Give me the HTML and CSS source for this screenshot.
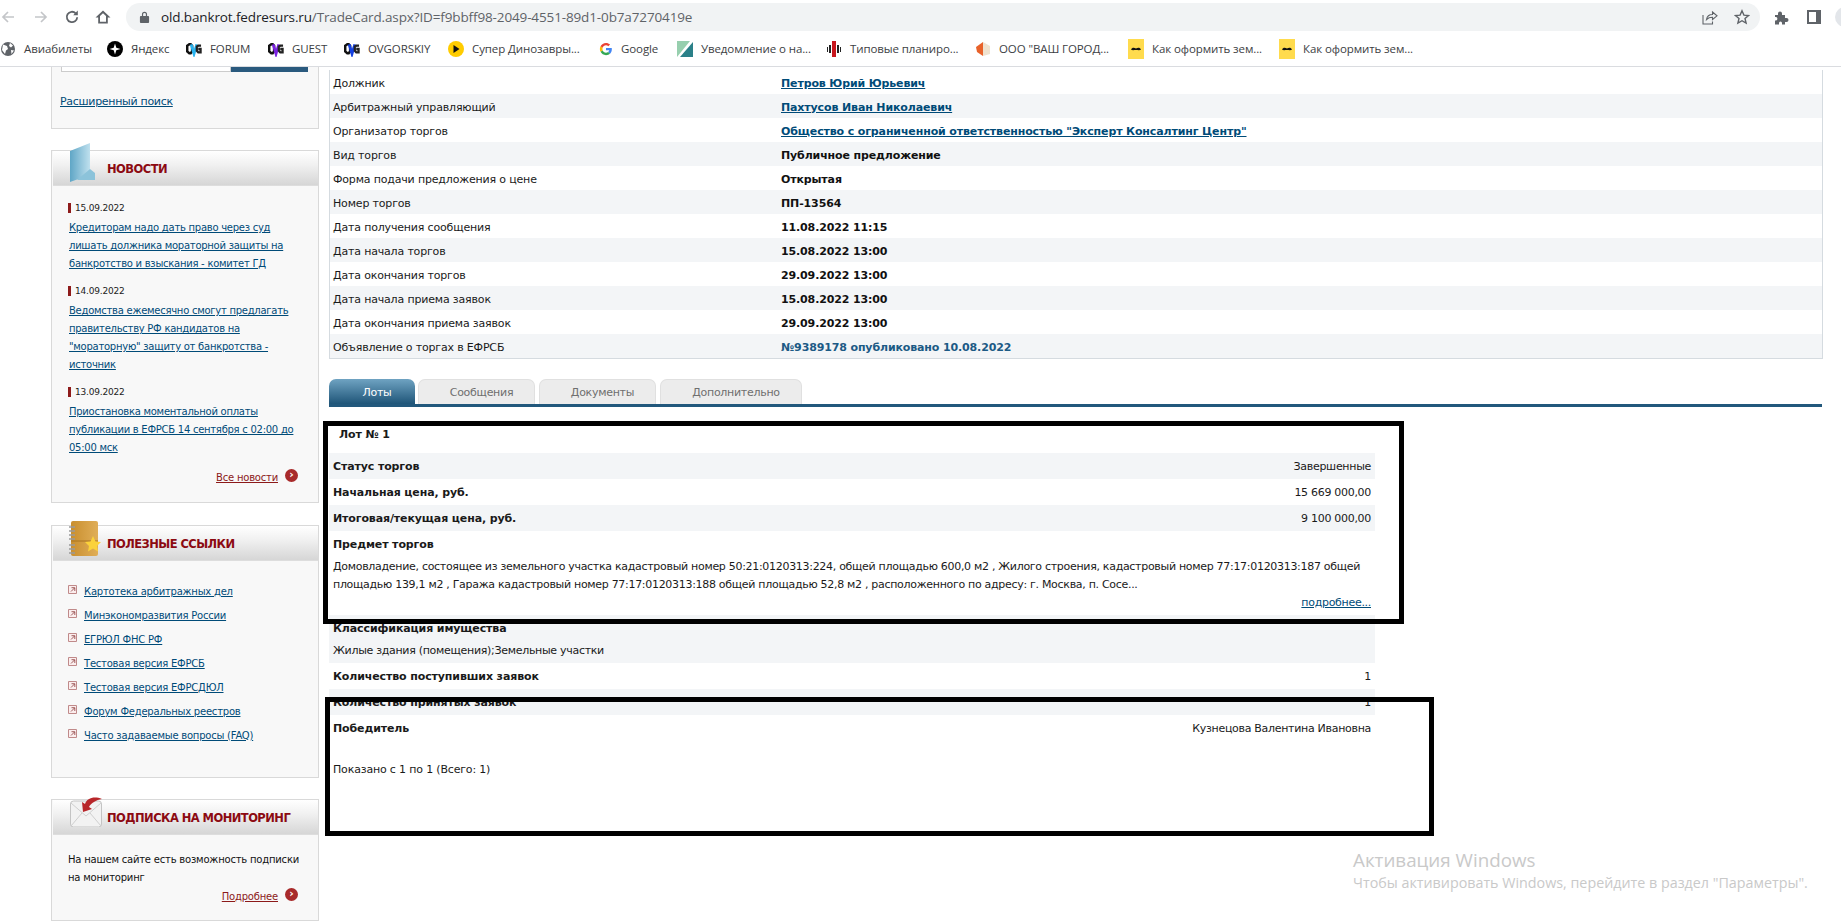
FILE: index.html
```html
<!DOCTYPE html>
<html lang="ru">
<head>
<meta charset="utf-8">
<title>TradeCard</title>
<link rel="stylesheet" href="styles.css">
</head>
<body>
<div class="page">
  <header class="toolbar">
    <div class="nav">
      <svg class="nav-ico" viewBox="0 0 16 16"><path d="M14 8H3M8 3L3 8l5 5" fill="none" stroke="#c4c6c9" stroke-width="1.7"/></svg>
      <svg class="nav-ico" viewBox="0 0 16 16"><path d="M2 8h11M8 3l5 5-5 5" fill="none" stroke="#c4c6c9" stroke-width="1.7"/></svg>
      <svg class="nav-ico" viewBox="0 0 16 16"><path d="M13.2 8.2a5.2 5.2 0 1 1-1.5-3.9" fill="none" stroke="#5f6368" stroke-width="1.8"/><path d="M13.8 1.6v4.6H9.2z" fill="#5f6368"/></svg>
      <svg class="nav-ico" viewBox="0 0 16 16"><path d="M8 1.500L.500 8.500h2.700v6h9.600v-6h2.700zM5 12.800V7l3-2.800L11 7v5.800z" fill="#5f6368"/></svg>
    </div>
    <div class="omnibox">
      <svg class="lock" viewBox="0 0 12 14"><path d="M2 6h8a1 1 0 0 1 1 1v5.500a1 1 0 0 1-1 1H2a1 1 0 0 1-1-1V7a1 1 0 0 1 1-1zM3.200 6V4a2.800 2.800 0 0 1 5.600 0v2H7.500V4a1.500 1.500 0 0 0-3 0v2z" fill="#5f6368"/></svg>
      <span class="url"><span class="url-host">old.bankrot.fedresurs.ru</span>/TradeCard.aspx?ID=f9bbff98-2049-4551-89d1-0b7a7270419e</span>
      <svg class="omni-ico share" viewBox="0 0 16 16"><path d="M1 6v9h9.500v-2.500M4.500 10.500c.5-3 2.500-5 6-5V3l4.500 3.800-4.500 3.700V8.200c-2.500 0-4.500.7-6 2.300z" fill="none" stroke="#5f6368" stroke-width="1.100"/></svg>
      <svg class="omni-ico star" viewBox="0 0 16 16"><path d="M8 1.800l1.900 4.300 4.600.4-3.500 3 1.100 4.600L8 11.700l-4.100 2.400L5 9.500l-3.500-3 4.600-.4z" fill="none" stroke="#5f6368" stroke-width="1.400"/></svg>
    </div>
    <div class="extras">
      <svg class="ext-ico" viewBox="0 0 16 16"><path d="M1 6h3V4.500a2 2 0 0 1 4 0V6h3v3h1.500a2 2 0 0 1 0 4H11v2.500H8V14a1.500 1.500 0 0 0-3 0v1.500H1v-4h1a1.800 1.800 0 0 0 0-3.500H1z" fill="#5f6368"/></svg>
      <svg class="ext-ico panel" viewBox="0 0 16 16"><path d="M1 1h14v14H1zM3 3v10h7V3z" fill="#5f6368" fill-rule="evenodd"/></svg>
      <span class="avatar"></span>
    </div>
  </header>

  <nav class="bookmarks">
    <span class="bm bm-first"><svg class="bm-ico" viewBox="0 0 16 16"><circle cx="8" cy="8" r="7" fill="#5f6368"/><path d="M3 3.500l4 1.500 1 3-2 1.500-1 3.500-3-4zM10 2l3 2.500-2 2-2-1.500zM11 9l3 .5-2.500 3.500z" fill="#fff"/></svg>Авиабилеты</span>
    <span class="bm bm-ya"><svg class="bm-ico" viewBox="0 0 16 16"><circle cx="8" cy="8" r="8" fill="#000"/><path d="M8 2.500l1.300 4.200L13.500 8l-4.200 1.300L8 13.500 6.700 9.300 2.500 8l4.200-1.300z" fill="#fff"/></svg>Яндекс</span>
    <span class="bm bm-forum"><svg class="bm-ico" viewBox="0 0 17 16"><path d="M1.300 4.500L3.500 3h1.500l1.500 1.500v6L5 12.500H3.500l-2.200-2z" fill="none" stroke="#111" stroke-width="2.600"/><path d="M5.500 3l3 10 3-10" fill="none" stroke="#2ab4f0" stroke-width="3"/><path d="M16 4.500h-3l-1.500 1v4.500l1.500 1.500h2.500V8H13" fill="none" stroke="#222" stroke-width="2.400"/></svg>FORUM</span>
    <span class="bm bm-guest"><svg class="bm-ico" viewBox="0 0 17 16"><path d="M1.300 4.500L3.500 3h1.500l1.500 1.500v6L5 12.500H3.500l-2.200-2z" fill="none" stroke="#111" stroke-width="2.600"/><path d="M5.500 3l3 10 3-10" fill="none" stroke="#7a22e0" stroke-width="3"/><path d="M16 4.500h-3l-1.500 1v4.500l1.500 1.500h2.500V8H13" fill="none" stroke="#222" stroke-width="2.400"/></svg>GUEST</span>
    <span class="bm bm-ovg"><svg class="bm-ico" viewBox="0 0 17 16"><path d="M1.300 4.500L3.500 3h1.500l1.500 1.500v6L5 12.500H3.500l-2.200-2z" fill="none" stroke="#111" stroke-width="2.600"/><path d="M5.500 3l3 10 3-10" fill="none" stroke="#1440e0" stroke-width="3"/><path d="M16 4.500h-3l-1.500 1v4.500l1.500 1.500h2.500V8H13" fill="none" stroke="#222" stroke-width="2.400"/></svg>OVGORSKIY</span>
    <span class="bm bm-dino"><svg class="bm-ico" viewBox="0 0 16 16"><circle cx="8" cy="8" r="8" fill="#fc0"/><path d="M5.500 4l6 4-6 4z" fill="#111"/></svg>Супер Динозавры...</span>
    <span class="bm bm-google"><svg class="bm-ico g-ico" viewBox="0 0 48 48"><path d="M44 24.500c0-1.500-.1-2.800-.4-4H24v8h11.300c-.5 2.500-2 4.800-4.300 6.200l6.900 5.300c4-3.700 6.100-9.100 6.100-15.500z" fill="#4285f4"/><path d="M24 45c5.700 0 10.500-1.900 13.900-5l-6.900-5.300c-1.900 1.300-4.300 2-7 2-5.400 0-10-3.600-11.600-8.500l-7.100 5.500C8.700 40.500 15.800 45 24 45z" fill="#34a853"/><path d="M12.400 28.200c-.9-2.600-.9-5.500 0-8.300l-7.100-5.500c-3 6-3 13.200 0 19.300z" fill="#fbbc05"/><path d="M24 11.300c3 0 5.800 1.100 7.900 3.100l6.100-6.100C34.300 4.900 29.300 3 24 3 15.800 3 8.700 7.500 5.300 14.400l7.100 5.500C14 14.900 18.600 11.300 24 11.300z" fill="#ea4335"/></svg>Google</span>
    <span class="bm bm-notice"><svg class="bm-ico" viewBox="0 0 16 16"><path d="M0 0h13L0 16z" fill="#97cfae"/><path d="M16 1v15H3z" fill="#2a8088"/></svg>Уведомление о на...</span>
    <span class="bm bm-types"><svg class="bm-ico" viewBox="0 0 16 16"><path d="M6 0h4v16H6z" fill="#c8161d"/><path d="M1 6h1v5H1zM3 4h2v8H3zM11 4h2v8h-2zM14 6h1v5h-1z" fill="#222"/></svg>Типовые планиро...</span>
    <span class="bm bm-ooo"><svg class="bm-ico" viewBox="0 0 16 16"><path d="M8 1L1 6l1 5 6 4z" fill="#e8622a"/><path d="M8 1l7 4v8l-7 2z" fill="#efe2cf"/></svg>ООО "ВАШ ГОРОД...</span>
    <span class="bm bm-how"><svg class="bm-ico" viewBox="0 0 16 20"><path d="M0 0h16v20H0z" fill="#ffdb4d"/><path d="M3 10.500c1-2 3-2 5-1 2-1 4-1 5 1-1 1-3 .5-5 .5s-4 .5-5-.5z" fill="#111"/></svg>Как оформить зем...</span>
    <span class="bm bm-how"><svg class="bm-ico" viewBox="0 0 16 20"><path d="M0 0h16v20H0z" fill="#ffdb4d"/><path d="M3 10.500c1-2 3-2 5-1 2-1 4-1 5 1-1 1-3 .5-5 .5s-4 .5-5-.5z" fill="#111"/></svg>Как оформить зем...</span>
  </nav>

  <div class="site">
    <aside class="sidebar">
      <section class="box box-search">
        <div class="search-row"><span class="search-input"></span><span class="search-btn"></span></div>
        <a class="link adv" href="#">Расширенный поиск</a>
      </section>

      <section class="box box-news">
        <div class="box-head">
          <svg class="head-ico book" viewBox="0 0 27 40"><defs><linearGradient id="bk" x1="0" x2="1"><stop offset="0" stop-color="#5fa6c6"/><stop offset="1" stop-color="#bfe0ee"/></linearGradient></defs><path d="M1 8L21 0v32L1 39z" fill="url(#bk)"/><path d="M21 26l5 4v7H8z" fill="#8cc3da"/></svg>
          <h2 class="box-title">НОВОСТИ</h2>
        </div>
        <div class="news">
          <div class="date">15.09.2022</div>
          <a class="link" href="#">Кредиторам надо дать право через суд лишать должника мораторной защиты на банкротство и взыскания - комитет ГД</a>
          <div class="date">14.09.2022</div>
          <a class="link" href="#">Ведомства ежемесячно смогут предлагать правительству РФ кандидатов на "мораторную" защиту от банкротства - источник</a>
          <div class="date">13.09.2022</div>
          <a class="link" href="#">Приостановка моментальной оплаты публикации в ЕФРСБ 14 сентября с 02:00 до 05:00 мск</a>
        </div>
        <div class="more more-news"><a class="more-link" href="#">Все новости</a><span class="more-dot">›</span></div>
      </section>

      <section class="box box-links">
        <div class="box-head">
          <svg class="head-ico notebook" viewBox="0 0 34 36"><defs><linearGradient id="nb" x1="0" x2="1"><stop offset="0" stop-color="#c98f2f"/><stop offset="1" stop-color="#e0ae58"/></linearGradient></defs><rect x="2" y="0" width="27" height="35" rx="2" fill="url(#nb)"/><path d="M2 20h27" stroke="#a87420"/><path d="M0 6h6M0 10h6M0 14h6M0 18h6M0 24h6M0 28h6M0 32h6" stroke="#9a9a9a" stroke-width="1.300"/><path d="M24 15l2.500 5.500 5.500.5-4 4 1 5.500-5-3-5 3 1-5.500-4-4 5.500-.5z" fill="#fbd23a"/></svg>
          <h2 class="box-title">ПОЛЕЗНЫЕ ССЫЛКИ</h2>
        </div>
        <ul class="links">
          <li class="links-item"><svg class="ext" viewBox="0 0 9 9"><path d="M.5.500h8v8h-8z" fill="#fbeeee" stroke="#c08a8a"/><path d="M3 6.500L6.500 3M3.500 2.700h3.300V6" fill="none" stroke="#8a3a3a" stroke-width=".8"/></svg><a class="link" href="#">Картотека арбитражных дел</a></li>
          <li class="links-item"><svg class="ext" viewBox="0 0 9 9"><path d="M.5.500h8v8h-8z" fill="#fbeeee" stroke="#c08a8a"/><path d="M3 6.500L6.500 3M3.500 2.700h3.300V6" fill="none" stroke="#8a3a3a" stroke-width=".8"/></svg><a class="link" href="#">Минэкономразвития России</a></li>
          <li class="links-item"><svg class="ext" viewBox="0 0 9 9"><path d="M.5.500h8v8h-8z" fill="#fbeeee" stroke="#c08a8a"/><path d="M3 6.500L6.500 3M3.500 2.700h3.300V6" fill="none" stroke="#8a3a3a" stroke-width=".8"/></svg><a class="link" href="#">ЕГРЮЛ ФНС РФ</a></li>
          <li class="links-item"><svg class="ext" viewBox="0 0 9 9"><path d="M.5.500h8v8h-8z" fill="#fbeeee" stroke="#c08a8a"/><path d="M3 6.500L6.500 3M3.500 2.700h3.300V6" fill="none" stroke="#8a3a3a" stroke-width=".8"/></svg><a class="link" href="#">Тестовая версия ЕФРСБ</a></li>
          <li class="links-item"><svg class="ext" viewBox="0 0 9 9"><path d="M.5.500h8v8h-8z" fill="#fbeeee" stroke="#c08a8a"/><path d="M3 6.500L6.500 3M3.500 2.700h3.300V6" fill="none" stroke="#8a3a3a" stroke-width=".8"/></svg><a class="link" href="#">Тестовая версия ЕФРСДЮЛ</a></li>
          <li class="links-item"><svg class="ext" viewBox="0 0 9 9"><path d="M.5.500h8v8h-8z" fill="#fbeeee" stroke="#c08a8a"/><path d="M3 6.500L6.500 3M3.500 2.700h3.300V6" fill="none" stroke="#8a3a3a" stroke-width=".8"/></svg><a class="link" href="#">Форум Федеральных реестров</a></li>
          <li class="links-item"><svg class="ext" viewBox="0 0 9 9"><path d="M.5.500h8v8h-8z" fill="#fbeeee" stroke="#c08a8a"/><path d="M3 6.500L6.500 3M3.500 2.700h3.300V6" fill="none" stroke="#8a3a3a" stroke-width=".8"/></svg><a class="link" href="#">Часто задаваемые вопросы (FAQ)</a></li>
        </ul>
      </section>

      <section class="box box-sub">
        <div class="box-head">
          <svg class="head-ico mail" viewBox="0 0 34 30"><path d="M1.500 7a3 3 0 0 1 3-3h25a3 3 0 0 1 3 3v20a3 3 0 0 1-3 3h-25a3 3 0 0 1-3-3z" fill="#f2f2f2" stroke="#c4c4c4"/><path d="M2 6l15 13L32 6M2 29l11-13M32 29L21 16" fill="none" stroke="#cfcfcf"/><path d="M33 2C25-1 18 1 16 7l-3-2 1 10 9-3-3-2c2-4 7-7 13-8z" fill="#b8262a"/></svg>
          <h2 class="box-title">ПОДПИСКА НА МОНИТОРИНГ</h2>
        </div>
        <p class="sub-text">На нашем сайте есть возможность подписки на мониторинг</p>
        <div class="more"><a class="more-link" href="#">Подробнее</a><span class="more-dot">›</span></div>
      </section>
    </aside>

    <main class="content">
      <div class="info">
        <div class="info-row"><span>Должник</span><a class="info-link" href="#">Петров Юрий Юрьевич</a></div>
        <div class="info-row"><span>Арбитражный управляющий</span><a class="info-link" href="#">Пахтусов Иван Николаевич</a></div>
        <div class="info-row"><span>Организатор торгов</span><a class="info-link" href="#">Общество с ограниченной ответственностью "Эксперт Консалтинг Центр"</a></div>
        <div class="info-row"><span>Вид торгов</span><b class="info-val">Публичное предложение</b></div>
        <div class="info-row"><span>Форма подачи предложения о цене</span><b class="info-val">Открытая</b></div>
        <div class="info-row"><span>Номер торгов</span><b class="info-val">ПП-13564</b></div>
        <div class="info-row"><span>Дата получения сообщения</span><b class="info-val">11.08.2022 11:15</b></div>
        <div class="info-row"><span>Дата начала торгов</span><b class="info-val">15.08.2022 13:00</b></div>
        <div class="info-row"><span>Дата окончания торгов</span><b class="info-val">29.09.2022 13:00</b></div>
        <div class="info-row"><span>Дата начала приема заявок</span><b class="info-val">15.08.2022 13:00</b></div>
        <div class="info-row"><span>Дата окончания приема заявок</span><b class="info-val">29.09.2022 13:00</b></div>
        <div class="info-row"><span>Объявление о торгах в ЕФРСБ</span><b class="info-val info-blue">№9389178 опубликовано 10.08.2022</b></div>
      </div>

      <div class="tabs">
        <span class="tab tab-on tab-lots">Лоты</span>
        <span class="tab tab-msg">Сообщения</span>
        <span class="tab tab-doc">Документы</span>
        <span class="tab tab-add">Дополнительно</span>
      </div>

      <div class="lot">
        <div class="lot-title">Лот № 1</div>
        <div class="lot-row"><b>Статус торгов</b><span>Завершенные</span></div>
        <div class="lot-row"><b>Начальная цена, руб.</b><span>15 669 000,00</span></div>
        <div class="lot-row"><b>Итоговая/текущая цена, руб.</b><span>9 100 000,00</span></div>
        <div class="lot-block">
          <b class="lot-head">Предмет торгов</b>
          <div class="lot-text">Домовладение, состоящее из земельного участка кадастровый номер 50:21:0120313:224, общей площадью 600,0 м2 , Жилого строения, кадастровый номер 77:17:0120313:187 общей<br>площадью 139,1 м2 , Гаража кадастровый номер 77:17:0120313:188 общей площадью 52,8 м2 , расположенного по адресу: г. Москва, п. Сосе...</div>
          <div class="lot-more"><a class="link" href="#">подробнее...</a></div>
        </div>
        <div class="lot-block lot-block-short">
          <b class="lot-head">Классификация имущества</b>
          <div class="lot-text">Жилые здания (помещения);Земельные участки</div>
        </div>
        <div class="lot-row"><b>Количество поступивших заявок</b><span>1</span></div>
        <div class="lot-row"><b>Количество принятых заявок</b><span>1</span></div>
        <div class="lot-row"><b>Победитель</b><span>Кузнецова Валентина Ивановна</span></div>
      </div>
      <div class="shown">Показано с 1 по 1 (Всего: 1)</div>
    </main>
  </div>

  <div class="mark mark-one"></div>
  <div class="mark mark-two"></div>
  <div class="activation">
    <div class="act-title">Активация Windows</div>
    <div class="act-sub">Чтобы активировать Windows, перейдите в раздел "Параметры".</div>
  </div>
</div>
</body>
</html>
```

FILE: styles.css
```css
* { box-sizing: border-box; }
html, body { margin: 0; padding: 0; background: #fff; }
.page { position: relative; width: 1841px; height: 923px; overflow: hidden; font-family: "DejaVu Sans", sans-serif; font-size: 11px; color: #1a1a1a; }

/* browser chrome */
.toolbar { display: flex; align-items: center; height: 33px; padding-top: 1px; }
.nav { display: flex; flex: none; width: 126px; }
.nav-ico { width: 16px; height: 16px; }
.nav-ico:nth-child(2) { margin-left: 17px; }
.nav-ico:nth-child(3) { margin-left: 15px; }
.nav-ico:nth-child(4) { margin-left: 15px; }
.omnibox { display: flex; flex: none; align-items: center; width: 1634px; height: 28px; background: #f1f3f4; border-radius: 14px; padding-left: 13px; font-family: "Open Sans", sans-serif; font-size: 13.500px; color: #5f6368; }
.lock { width: 11px; height: 14px; margin-right: 11px; flex: none; }
.url { flex: 1; white-space: nowrap; letter-spacing: -.13px; }
.url-host { color: #202124; }
.omni-ico { width: 16px; height: 16px; flex: none; }
.share { margin-right: 16px; }
.star { margin-right: 10px; }
.extras { display: flex; flex: none; align-items: center; margin-left: 14px; }
.ext-ico { width: 16px; height: 16px; }
.panel { margin-left: 16px; }
.avatar { width: 20px; height: 20px; border-radius: 50%; background: #e3e6ea; margin-left: 13px; flex: none; }

.bookmarks { display: flex; align-items: center; height: 34px; padding-bottom: 2px; border-bottom: 1px solid #dadce0; font-family: "Open Sans", sans-serif; font-size: 11.500px; color: #3c4043; white-space: nowrap; letter-spacing: -.1px; }
.bm { display: flex; align-items: center; flex: none; }
.bm-ico { width: 16px; height: 16px; margin-right: 8px; flex: none; }
.bm-first { width: 107px; }
.bm-ya { width: 79px; }
.bm-forum { width: 82px; }
.bm-guest { width: 76px; }
.bm-ovg { width: 104px; }
.bm-dino { width: 151px; }
.bm-google { width: 78px; }
.g-ico { width: 14px; height: 14px; margin-right: 8px; }
.bm-notice { width: 149px; }
.bm-types { width: 149px; }
.bm-ooo { width: 153px; }
.bm-how { width: 151px; }
.bm-how .bm-ico { height: 20px; }

/* site */
.site { display: flex; align-items: flex-start; height: 856px; }
.sidebar { width: 329px; flex: none; padding-left: 51px; display: flex; flex-direction: column; }
.box { width: 268px; background: #f8f8f8; border: 1px solid #d9d9d9; }
.box-search { height: 62px; border-top: 0; padding-left: 9px; }
.search-row { display: flex; height: 5px; }
.search-input { width: 170px; background: #fff; border: 1px solid #ccc; border-top: 0; }
.search-btn { width: 77px; background: #2a5a7e; }
.link { color: #004b78; text-decoration: underline; font-size: 10px; letter-spacing: -.2px; }
.adv { display: inline-block; margin: 23px 0 0 -1px; font-size: 11px; letter-spacing: -.3px; }
.box-news { height: 353px; margin-top: 21px; }
.box-links { height: 253px; margin-top: 22px; }
.box-sub { height: 122px; margin-top: 21px; }
.box-head { position: relative; height: 35px; margin-left: 1px; padding: 2px 0 0 54px; background: linear-gradient(#fff, #f1f1f1 40%, #d6d6d6); border-bottom: 1px solid #ddd; display: flex; align-items: center; }
.box-title { margin: 0; font-size: 11.500px; line-height: 16px; font-weight: bold; color: #8c0a12; letter-spacing: -.55px; }
.head-ico { position: absolute; left: 16px; }
.book { top: -8px; width: 27px; height: 40px; }
.notebook { top: -5px; width: 34px; height: 36px; }
.mail { top: -3px; width: 34px; height: 30px; }
.news { padding: 12px 14px 0 16px; }
.date { border-left: 3px solid #8e1b1b; height: 10px; line-height: 10px; padding-left: 4px; margin: 5px 0 6px; font-size: 9px; letter-spacing: -.2px; color: #222; display: flex; align-items: center; }
.news .link { display: block; line-height: 18px; margin: 0 0 13px 1px; letter-spacing: -.26px; }
.more { display: flex; justify-content: flex-end; align-items: center; padding-right: 33px; font-size: 10px; }
.more-news { margin-top: 15px; }
.more-link { color: #8c1a1a; text-decoration: underline; letter-spacing: -.2px; }
.more-dot { width: 13px; height: 13px; margin: -4px -13px 0 7px; border-radius: 50%; background: #a82a2a; color: #fff; font-size: 11px; font-weight: bold; line-height: 11px; text-align: center; }
.links { list-style: none; margin: 0; padding: 18px 0 0 16px; }
.links-item { display: flex; align-items: center; height: 24px; }
.ext { width: 9px; height: 9px; margin: -3px 7px 0 0; flex: none; }
.links .link { letter-spacing: -.22px; }
.sub-text { margin: 16px 10px 0 16px; line-height: 18px; font-size: 10px; letter-spacing: -.2px; color: #111; }
.box-sub .more { height: 18px; }

.content { width: 1493px; flex: none; display: flex; flex-direction: column; }
.info { margin-top: 3px; border: 1px solid #d5dbe0; border-top: 0; width: 1494px; }
.info-row { display: grid; grid-template-columns: 448px 1fr; align-items: center; height: 24px; padding: 2px 0 0 3px; letter-spacing: -.17px; }
.info-row:nth-child(even) { background: #f3f5f7; }
.info-link { color: #004b78; font-weight: bold; text-decoration: underline; letter-spacing: -.13px; }
.info-val { font-weight: bold; color: #111; letter-spacing: -.13px; }
.info-blue { color: #1c5a85; }

.tabs { display: flex; height: 28px; margin-top: 20px; border-bottom: 3px solid #22587c; gap: 3px; align-items: flex-end; }
.tab { display: flex; align-items: center; justify-content: center; height: 25px; padding: 1px 0 0 10px; background: #ececec; border: 1px solid #e0e0e0; border-bottom: 0; border-radius: 7px 7px 0 0; color: #6f6f6f; letter-spacing: -.28px; }
.tab-on { background: linear-gradient(#6fa3c2, #1f5578); border: 0; color: #fff; }
.tab-lots { width: 86px; }
.tab-msg { width: 117px; }
.tab-doc { width: 117px; margin-left: 1px; }
.tab-add { width: 142px; margin-left: 1px; }

.lot { width: 1046px; letter-spacing: -.3px; }
.lot b { letter-spacing: -.12px; }
.lot-title { height: 46px; padding: 21px 0 0 10px; line-height: 14px; font-weight: bold; letter-spacing: -.12px; }
.lot-row { display: flex; justify-content: space-between; align-items: center; height: 26px; padding: 0 4px; }
.lot > .lot-row:nth-of-type(2), .lot > .lot-row:nth-of-type(4) { background: #f3f5f7; }
.lot-block { height: 84px; padding: 0 4px; }
.lot-head { display: block; line-height: 27px; }
.lot-text { line-height: 18px; white-space: nowrap; }
.lot-more { text-align: right; line-height: 18px; }
.lot-more .link { font-size: 11px; letter-spacing: -.3px; }
.lot-block-short { height: 48px; background: #f3f5f7; }
.lot > .lot-row:nth-last-child(2) { background: #f3f5f7; }
.shown { margin-top: 20px; padding-left: 4px; letter-spacing: -.17px; line-height: 18px; }

/* annotations and overlays */
.mark { position: absolute; border: 5px solid #000; }
.mark-one { left: 323px; top: 421px; width: 1081px; height: 203px; }
.mark-two { left: 325px; top: 697px; width: 1109px; height: 139px; }
.activation { position: absolute; left: 1353px; top: 848px; font-family: "Open Sans", sans-serif; color: #c9c9c9; white-space: nowrap; }
.act-title { font-size: 18.800px; line-height: 25px; }
.act-sub { font-size: 14.300px; line-height: 20px; }
```
